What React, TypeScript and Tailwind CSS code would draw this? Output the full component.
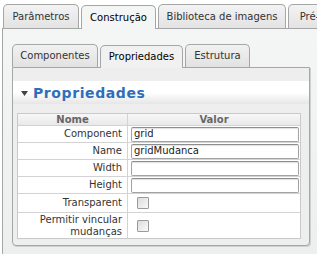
import React from 'react'

const outerTabs = [
  { label: 'Parâmetros', w: 'w-[76px]', active: false },
  { label: 'Construção', w: 'w-[75px]', active: true },
  { label: 'Biblioteca de imagens', w: 'w-[128px]', active: false },
  { label: 'Pré-visualizar', w: 'w-[90px]', active: false },
]

const innerTabs = [
  { label: 'Componentes', w: 'w-[86px]', active: false },
  { label: 'Propriedades', w: 'w-[83px]', active: true },
  { label: 'Estrutura', w: 'w-[65px]', active: false },
]

type Row = { name: React.ReactNode; kind: 'text' | 'check'; value?: string; h: string }

const rows: Row[] = [
  { name: 'Component', kind: 'text', value: 'grid', h: 'h-[17px]' },
  { name: 'Name', kind: 'text', value: 'gridMudanca', h: 'h-[17px]' },
  { name: 'Width', kind: 'text', value: '', h: 'h-[17px]' },
  { name: 'Height', kind: 'text', value: '', h: 'h-[17px]' },
  { name: 'Transparent', kind: 'check', h: 'h-[19px]' },
  {
    name: (
      <>
        Permitir vincular
        <br />
        mudanças
      </>
    ),
    kind: 'check',
    h: 'h-[25px]',
  },
]

function Tab({ label, w, active }: { label: string; w: string; active: boolean }) {
  return (
    <div
      className={
        active
          ? `${w} h-[24px] shrink-0 flex items-center justify-center rounded-t-[5px] border border-b-0 border-[#a6a6a6] bg-[#f4f5f5] mb-[-1px] text-black`
          : `${w} h-[24px] shrink-0 flex items-center justify-center rounded-t-[5px] border border-b-0 border-[#a6a6a6] bg-gradient-to-b from-[#f3f3f3] to-[#e3e3e3] text-[#333]`
      }
    >
      {label}
    </div>
  )
}

function InnerTab({ label, w, active }: { label: string; w: string; active: boolean }) {
  return (
    <div
      className={
        active
          ? `${w} h-[23px] shrink-0 flex items-center justify-center rounded-t-[5px] border border-b-0 border-[#a6a6a6] bg-[#f1f1f1] mb-[-1px] text-black`
          : `${w} h-[23px] shrink-0 flex items-center justify-center rounded-t-[5px] border border-b-0 border-[#a6a6a6] bg-gradient-to-b from-[#f1f1f1] to-[#e2e2e2] text-[#333]`
      }
    >
      {label}
    </div>
  )
}

export default function App() {
  return (
    <div className="w-[317px] h-[254px] overflow-hidden bg-white font-['DejaVu_Sans',sans-serif] text-[10px] leading-[12px]">
      {/* Outer tabs */}
      <div className="flex items-end gap-[2px] pl-[3px] pt-[4px] relative z-10">
        {outerTabs.map((t) => (
          <Tab key={t.label} {...t} />
        ))}
      </div>

      {/* Outer panel */}
      <div className="ml-[2px] w-[400px] h-[270px] border border-[#a6a6a6] bg-gradient-to-b from-[#f4f5f5] to-[#eceded] pt-[15px] pl-[9px]">
        {/* Inner tabs */}
        <div className="flex items-end gap-[2px] relative z-10">
          {innerTabs.map((t) => (
            <InnerTab key={t.label} {...t} />
          ))}
        </div>

        {/* Inner panel */}
        <div className="w-[298px] border border-[#a6a6a6] rounded-b-[4px] bg-[#eeeeee] shadow-[1px_1px_0_#d0d0d0] pt-[13px] pb-[6px]">
          {/* Section header */}
          <div className="h-[23px] flex items-center gap-[5px] pl-[8px] bg-gradient-to-b from-white via-white to-[#e6e6e6]">
            <svg width="7" height="5" viewBox="0 0 7 5" className="mt-[2px]">
              <path d="M0 0H7L3.5 5Z" fill="#444" />
            </svg>
            <span className="font-bold text-[14px] tracking-[0.6px] text-[#2d6fba]">Propriedades</span>
          </div>

          {/* Table */}
          <div className="mt-[9px] ml-[4px] w-[284px] border border-[#c9c9c9] bg-white">
            <div className="flex h-[12px] bg-gradient-to-b from-[#f7f7f7] to-[#e9e9e9] font-bold text-[#666] border-b border-[#d3d3d3]">
              <div className="w-[110px] flex items-center justify-center border-r border-[#d3d3d3]">Nome</div>
              <div className="flex-1 flex items-center justify-center">Valor</div>
            </div>
            {rows.map((r, i) => (
              <div
                key={i}
                className={`flex ${r.h} ${i < rows.length - 1 ? 'border-b border-[#d3d3d3]' : ''}`}
              >
                <div className="w-[110px] flex items-center justify-end text-right pr-[5px] text-[#333] border-r border-[#d3d3d3]">
                  <span>{r.name}</span>
                </div>
                <div className="flex-1 flex items-center pl-[3px] pr-[1px]">
                  {r.kind === 'text' ? (
                    <div className="w-full h-[15px] rounded-[2px] border border-[#a3a3a3] border-t-[#8d8d8d] bg-white shadow-[inset_0_1px_1px_#e0e0e0] pl-[2px] flex items-center text-[#222]">
                      {r.value}
                    </div>
                  ) : (
                    <div className="ml-[6px] w-[12px] h-[12px] border border-[#9b9b9b] rounded-[1px] bg-gradient-to-br from-[#dcdcdc] to-[#fafafa]" />
                  )}
                </div>
              </div>
            ))}
          </div>
        </div>
      </div>
    </div>
  )
}
